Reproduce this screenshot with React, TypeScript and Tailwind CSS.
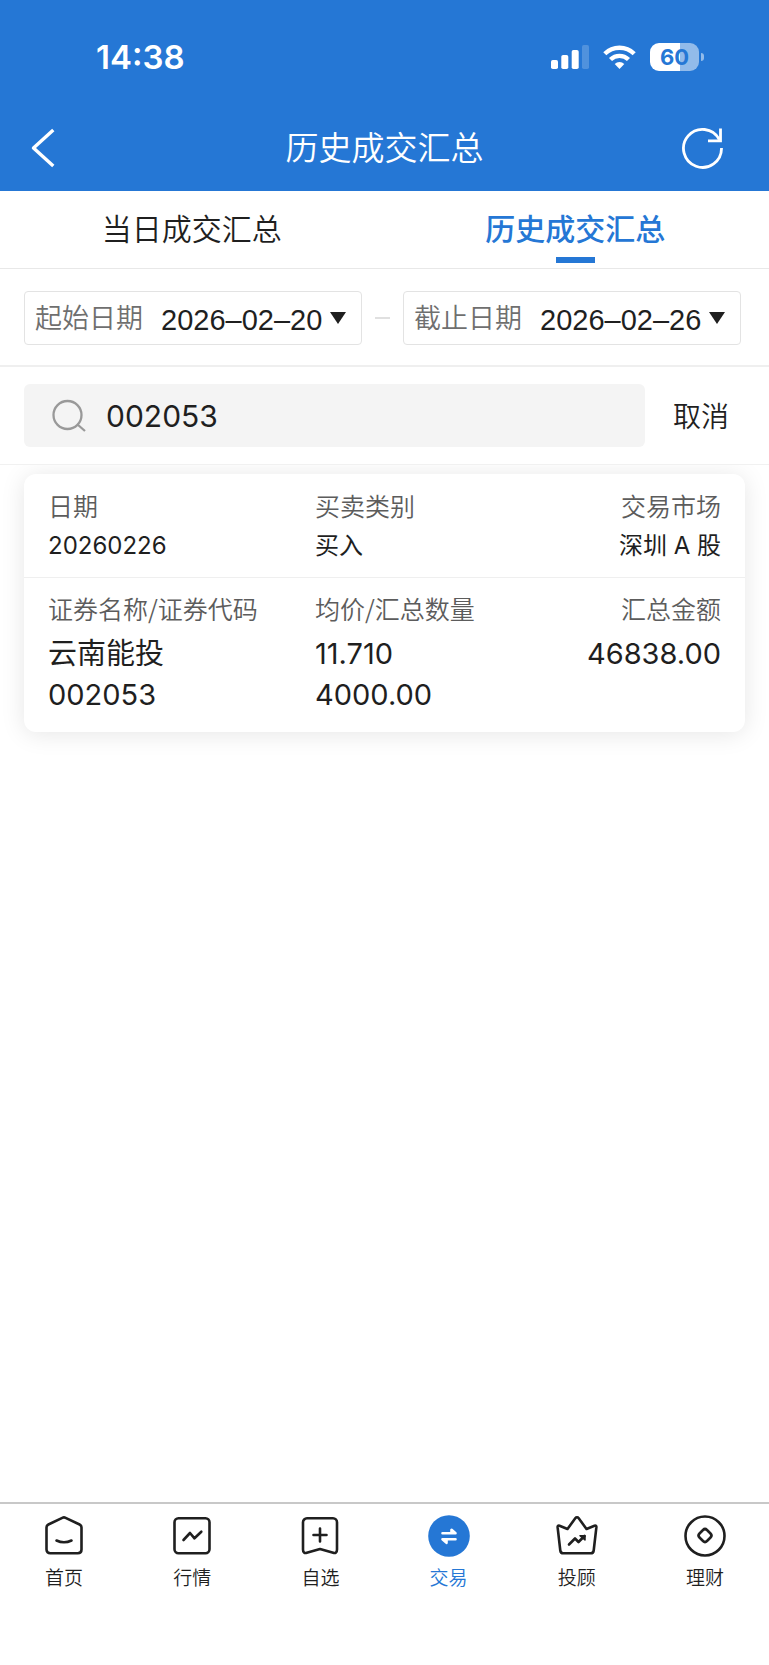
import { useState } from "react";
import type { ReactNode } from "react";
import clsx from "clsx";

const tabs = ["当日成交汇总", "历史成交汇总"];

const navItems: { label: string; icon: ReactNode }[] = [
  {
    label: "首页",
    icon: (
      <>
        <path d="M4.500 13.600c0-1.400.7-2.500 1.900-3.100L20.300 3.800c1-.5 2.300-.5 3.300 0l14 6.700c1.200.6 1.900 1.700 1.900 3.100v22c0 2.200-1.500 3.700-3.700 3.700H8.200c-2.200 0-3.700-1.500-3.700-3.700z" />
        <path d="M14.500 26.500c5 2.400 10 2.400 15 0" />
      </>
    ),
  },
  {
    label: "行情",
    icon: (
      <>
        <rect x="4.500" y="4.300" width="35" height="35" rx="4" />
        <path d="m13.500 26 6.500-7 4.500 5.300 6.800-6.600" />
      </>
    ),
  },
  {
    label: "自选",
    icon: (
      <>
        <path d="M5 8.300a4 4 0 0 1 4-4h26a4 4 0 0 1 4 4v27.200c0 2.800-1.500 4-3.800 3.300L22 35 8.800 38.800c-2.300.7-3.800-.5-3.800-3.300z" />
        <path d="M22 14.500v13M15.500 21h13" />
      </>
    ),
  },
  {
    label: "交易",
    icon: (
      <>
        <circle cx="22" cy="22" r="20.800" fill="currentColor" stroke="none" />
        <path
          d="M15.500 19.300h13l-4-3.500v3M28.500 25.300h-13l4 3.500v-3"
          stroke="#fff"
          strokeWidth="2.600"
        />
      </>
    ),
  },
  {
    label: "投顾",
    icon: (
      <>
        <path d="m12.500 15 7.800-10.800c.9-1.200 2.500-1.200 3.400 0L31.500 15l8-3.200c1.200-.5 2 .2 1.900 1.400l-2.700 23.300c-.2 1.800-1.300 2.800-3.100 2.800H8.400c-1.800 0-2.900-1-3.100-2.800L2.600 13.200c-.1-1.200.7-1.900 1.900-1.400z" />
        <path d="m14 30.500 6-6 3.500 3.500 6-6" />
        <path d="M25 21.700h5v4.300z" fill="currentColor" strokeWidth="1.500" />
      </>
    ),
  },
  {
    label: "理财",
    icon: (
      <>
        <circle cx="22" cy="22" r="19.500" />
        <path d="M20 16c1.200-1.200 2.800-1.200 4 0l3.500 3.500c1.200 1.200 1.200 2.800 0 4L24 27c-1.200 1.200-2.800 1.200-4 0L16.500 23.500c-1.200-1.200-1.200-2.800 0-4z" />
      </>
    ),
  },
];

function StatusBar() {
  return (
    <div className="flex h-[105px] items-center justify-between pt-[9px] pr-[65px] pl-24">
      <span className="text-[33px] leading-10 font-semibold">14:38</span>
      <div className="flex items-center gap-[14px]">
        <svg className="h-6 w-[38px]" viewBox="0 0 38 24" fill="currentColor">
          <rect x="0" y="15" width="7" height="9" rx="1.800" />
          <rect x="10.300" y="10" width="7" height="14" rx="1.800" />
          <rect x="20.700" y="5" width="7" height="19" rx="1.800" />
          <rect x="31" y="0" width="7" height="24" rx="1.800" opacity=".2" />
        </svg>
        <svg className="h-6 w-[33px]" viewBox="0 0 33 24" fill="none" stroke="currentColor" strokeWidth="4.400">
          <path d="M1.800 8.700a21 21 0 0 1 29.400 0" />
          <path d="M7.500 14.500a13 13 0 0 1 18 0" />
          <path d="m16.500 24-4.800-5a7 7 0 0 1 9.600 0z" fill="currentColor" stroke="none" />
        </svg>
        <div className="flex items-center gap-[2px]">
          <div className="flex h-7 w-[49px] items-center justify-center rounded-[9px] bg-[linear-gradient(to_right,#fff_61%,#92bbea_61%)] text-[22px] font-bold text-[#2577d5]">
            60
          </div>
          <div className="h-2 w-[3px] rounded-r-full bg-[#92bbea]" />
        </div>
      </div>
    </div>
  );
}

function DateField({ id, label, value }: { id: string; label: string; value: string }) {
  return (
    <div className="flex h-[54px] flex-1 items-center rounded border border-[#e3e3e3] pt-[3px] pr-[15px] pl-[10px]">
      <label htmlFor={id} className="shrink-0 text-[27px] font-[350] text-[#6f6f6f]">
        {label}
      </label>
      <div className="relative ml-[18px] min-w-0 flex-1">
        <select
          id={id}
          defaultValue={value}
          className="block w-full appearance-none bg-transparent font-['Liberation_Sans',sans-serif] text-[29px] leading-10 outline-none"
        >
          <option value={value}>{value}</option>
        </select>
        <svg className="pointer-events-none absolute top-3 right-0 h-3 w-4" viewBox="0 0 16 12" fill="currentColor">
          <path d="M0 0h16L8 12z" />
        </svg>
      </div>
    </div>
  );
}

function Field({ label, values, large, right }: { label: string; values: string[]; large?: boolean; right?: boolean }) {
  return (
    <div className={clsx(right && "text-right")}>
      <dt
        className={clsx(
          "font-['Noto_Sans_CJK_SC',sans-serif] text-[25px] leading-9 font-[350] whitespace-nowrap text-[#5c5c5c]",
          large ? "mb-[7px]" : "mb-1"
        )}
      >
        {label}
      </dt>
      {values.map((v) => (
        <dd key={v} className={large ? "text-[29px] leading-[41px]" : "text-[24px] leading-[38px]"}>
          {v}
        </dd>
      ))}
    </div>
  );
}

export default function App() {
  const [tab, setTab] = useState(tabs[1]);
  const [code, setCode] = useState("002053");
  const [nav, setNav] = useState("交易");

  return (
    <div className="flex min-h-screen flex-col bg-white font-[Inter,'Noto_Sans_CJK_SC',sans-serif] text-[#1f1f1f]">
      <header className="bg-[#2577d5] text-white">
        <StatusBar />
        <div className="grid h-[86px] grid-cols-[1fr_auto_1fr] items-center">
          <button type="button" aria-label="返回" className="justify-self-start pl-7">
            <svg className="h-11 w-8" viewBox="0 0 32 44" fill="none" stroke="currentColor" strokeWidth="3.400">
              <path d="M25.300 4 5.500 22l19.800 18" strokeLinejoin="round" />
            </svg>
          </button>
          <h1 className="text-[33px] leading-10 font-[350]">历史成交汇总</h1>
          <button type="button" aria-label="刷新" className="justify-self-end pr-11">
            <svg className="h-11 w-11" viewBox="0 0 44 44" fill="none" stroke="currentColor" strokeWidth="2.800">
              <path d="M40.500 22A19 19 0 1 1 38.300 13.500" />
              <path d="M39.500 2.500v12.300H27" />
            </svg>
          </button>
        </div>
      </header>

      <div role="tablist" className="grid h-[78px] grid-cols-2 border-b border-[#e8e8e8] pr-0.5">
        {tabs.map((t) => (
          <button
            key={t}
            type="button"
            role="tab"
            aria-selected={t === tab}
            onClick={() => setTab(t)}
            className={clsx(
              "flex flex-col items-center pt-4 text-[30px] leading-11",
              t === tab ? "font-medium text-[#2577d5]" : "font-[350] text-[#1f1f1f]"
            )}
          >
            {t}
            {t === tab && <span className="mt-[6px] h-[6px] w-[39px] bg-[#2577d5]" />}
          </button>
        ))}
      </div>

      <div className="flex h-[98px] items-center border-b-2 border-[#efefef] pt-[2px] pr-7 pl-6">
        <DateField id="start" label="起始日期" value="2026–02–20" />
        <span className="mx-[13px] h-[2px] w-[15px] bg-[#e0e0e0]" />
        <DateField id="end" label="截止日期" value="2026–02–26" />
      </div>

      <div className="flex h-[98px] items-center gap-7 border-b border-[#f1f1f1] pr-10 pl-6">
        <label className="flex h-[63px] min-w-0 flex-1 items-center rounded-md bg-[#f4f4f4] pl-7">
          <svg className="h-9 w-9 text-[#999]" viewBox="0 0 36 36" fill="none" stroke="currentColor" strokeWidth="2.300">
            <circle cx="15.500" cy="17" r="14" />
            <path d="m25.500 26.500 7.500 6.500" />
          </svg>
          <input
            aria-label="证券代码"
            value={code}
            onChange={(e) => setCode(e.target.value)}
            className="ml-[18px] min-w-0 flex-1 bg-transparent pt-[2px] text-[30px] outline-none"
          />
        </label>
        <button type="button" onClick={() => setCode("")} className="pt-[2px] text-[28px] leading-10 font-[350]">
          取消
        </button>
      </div>

      <main className="flex-1 overflow-hidden px-6 pt-[9px]">
        <section className="rounded-xl bg-white shadow-[0_2px_24px_rgba(0,0,0,0.1)]">
          <dl className="grid grid-cols-[267fr_203fr_203fr] border-b border-[#efefef] px-6 pt-[13px] pb-3">
            <Field label="日期" values={["20260226"]} />
            <Field label="买卖类别" values={["买入"]} />
            <Field label="交易市场" values={["深圳 A 股"]} right />
          </dl>
          <dl className="grid grid-cols-[267fr_203fr_203fr] px-6 pt-3 pb-[17px]">
            <Field label="证券名称/证券代码" values={["云南能投", "002053"]} large />
            <Field label="均价/汇总数量" values={["11.710", "4000.00"]} large />
            <Field label="汇总金额" values={["46838.00"]} large right />
          </dl>
        </section>
      </main>

      <nav className="grid grid-cols-6 border-t-2 border-[#c8c8c8] pt-[10px] pb-[72px]">
        {navItems.map((item) => (
          <button
            key={item.label}
            type="button"
            onClick={() => setNav(item.label)}
            className={clsx("flex flex-col items-center gap-[7px]", item.label === nav && "text-[#2577d5]")}
          >
            <svg
              className="h-11 w-11"
              viewBox="0 0 44 44"
              fill="none"
              stroke="currentColor"
              strokeWidth="2.600"
              strokeLinecap="round"
              strokeLinejoin="round"
            >
              {item.icon}
            </svg>
            <span className="text-[19px] leading-7 font-[350]">{item.label}</span>
          </button>
        ))}
      </nav>
    </div>
  );
}
